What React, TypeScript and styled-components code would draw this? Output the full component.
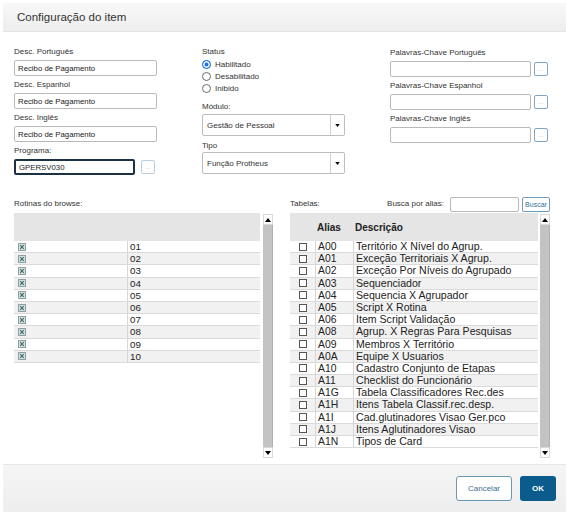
import React from "react"
import styled, { createGlobalStyle } from "styled-components"

const GlobalStyle = createGlobalStyle`
	html, body {
		margin: 0;
		padding: 0;
		background: #fff;
	}
	body {
		font-family: "Liberation Sans", Arial, sans-serif;
		color: #333;
	}
	* {
		box-sizing: border-box;
	}
`

const routines = ["01", "02", "03", "04", "05", "06", "07", "08", "09", "10"]

const tables: [string, string][] = [
	["A00", "Território X Nível do Agrup."],
	["A01", "Exceção Territoriais X Agrup."],
	["A02", "Exceção Por Níveis do Agrupado"],
	["A03", "Sequenciador"],
	["A04", "Sequencia X Agrupador"],
	["A05", "Script X Rotina"],
	["A06", "Item Script Validação"],
	["A08", "Agrup. X Regras Para Pesquisas"],
	["A09", "Membros X Território"],
	["A0A", "Equipe X Usuarios"],
	["A10", "Cadastro Conjunto de Etapas"],
	["A11", "Checklist do Funcionário"],
	["A1G", "Tabela Classificadores Rec.des"],
	["A1H", "Itens Tabela Classif.rec.desp."],
	["A1I", "Cad.glutinadores Visao Ger.pco"],
	["A1J", "Itens Aglutinadores Visao"],
	["A1N", "Tipos de Card"],
]

const CheckedBox = () => (
	<svg width="8" height="8" viewBox="0 0 8 8">
		<rect x="0.5" y="0.5" width="7" height="7" fill="#d5dfdf" stroke="#8ea0a0" />
		<path d="M2.2 2.2 L5.8 5.8 M5.8 2.2 L2.2 5.8" stroke="#3a6a6a" strokeWidth="1.1" />
	</svg>
)

const EmptyBox = () => (
	<svg width="8" height="8" viewBox="0 0 8 8">
		<rect x="0.5" y="0.5" width="7" height="7" fill="#fff" stroke="#555" />
	</svg>
)

const Arrow = ({ up }: { up?: boolean }) => (
	<svg width="6" height="4" viewBox="0 0 6 4">
		<path d={up ? "M0 4 L3 0 L6 4 Z" : "M0 0 L6 0 L3 4 Z"} fill="#000" />
	</svg>
)

const Scrollbar = () => (
	<ScrollTrack>
		<ScrollButton>
			<Arrow up />
		</ScrollButton>
		<ScrollFill />
		<ScrollButton>
			<Arrow />
		</ScrollButton>
	</ScrollTrack>
)

export default function App() {
	return (
		<>
			<GlobalStyle />
			<Dialog>
				<Header>
					<Title>Configuração do item</Title>
				</Header>
				<Body>
					<TopGrid>
						<Column>
							<Label>Desc. Português</Label>
							<TextInput defaultValue="Recibo de Pagamento" />
							<Label>Desc. Espanhol</Label>
							<TextInput defaultValue="Recibo de Pagamento" />
							<Label>Desc. Inglês</Label>
							<TextInput defaultValue="Recibo de Pagamento" />
							<Label>Programa:</Label>
							<InputRow>
								<TextInput defaultValue="GPERSV030" $focused $width={121} />
								<DotsButton $gap={6}>...</DotsButton>
							</InputRow>
						</Column>
						<Column>
							<Label>Status</Label>
							<RadioRow>
								<Radio $checked />
								Habilitado
							</RadioRow>
							<RadioRow>
								<Radio />
								Desabilitado
							</RadioRow>
							<RadioRow>
								<Radio />
								Inibido
							</RadioRow>
							<Label $top={7}>Módulo:</Label>
							<Select $top={1}>
								<SelectText>Gestão de Pessoal</SelectText>
								<SelectCaret>
									<Arrow />
								</SelectCaret>
							</Select>
							<Label $top={4}>Tipo</Label>
							<Select>
								<SelectText>Função Protheus</SelectText>
								<SelectCaret>
									<Arrow />
								</SelectCaret>
							</Select>
						</Column>
						<Column>
							<Label $top={1}>Palavras-Chave Português</Label>
							<InputRow>
								<TextInput $width={141} />
								<DotsButton $gap={3} $blue>...</DotsButton>
							</InputRow>
							<Label>Palavras-Chave Espanhol</Label>
							<InputRow>
								<TextInput $width={141} />
								<DotsButton $gap={3} $blue>...</DotsButton>
							</InputRow>
							<Label>Palavras-Chave Inglês</Label>
							<InputRow>
								<TextInput $width={141} />
								<DotsButton $gap={3} $blue>...</DotsButton>
							</InputRow>
						</Column>
					</TopGrid>
					<LowerGrid>
						<Panel>
							<PanelBar>
								<Label>Rotinas do browse:</Label>
							</PanelBar>
							<GridArea>
								<Table $width={246}>
									<TableHead $cols="113px 1fr" />
									{routines.map((r, i) => (
										<Row key={r} $cols="113px 1fr" $odd={i % 2 === 1}>
											<CheckCell>
												<CheckedBox />
											</CheckCell>
											<Cell $size={9.8}>{r}</Cell>
										</Row>
									))}
								</Table>
								<ScrollSlot $gap={3}>
									<Scrollbar />
								</ScrollSlot>
							</GridArea>
						</Panel>
						<Panel>
							<PanelBar>
								<Label>Tabelas:</Label>
								<Spacer />
								<Label>Busca por alias:</Label>
								<SearchInput />
								<SearchButton>Buscar</SearchButton>
							</PanelBar>
							<GridArea>
								<Table $width={248}>
									<TableHead $cols="25px 38px 1fr">
										<span />
										<HeadCell>Alias</HeadCell>
										<HeadCell>Descrição</HeadCell>
									</TableHead>
									{tables.map(([alias, desc], i) => (
										<Row key={alias} $cols="25px 38px 1fr" $odd={i % 2 === 1}>
											<CheckCell $center>
												<EmptyBox />
											</CheckCell>
											<Cell $size={10.4}>{alias}</Cell>
											<Cell $size={10.6}>{desc}</Cell>
										</Row>
									))}
								</Table>
								<ScrollSlot $gap={2}>
									<Scrollbar />
								</ScrollSlot>
							</GridArea>
						</Panel>
					</LowerGrid>
				</Body>
				<Footer>
					<CancelButton>Cancelar</CancelButton>
					<OkButton>OK</OkButton>
				</Footer>
			</Dialog>
		</>
	)
}

const Dialog = styled.div`
	width: 563px;
	height: 509px;
	margin: 3px;
	display: flex;
	flex-direction: column;
	background: #fff;
`

const Header = styled.div`
	height: 29px;
	padding-left: 14px;
	display: flex;
	align-items: center;
	background: linear-gradient(#f8f8f8, #ededed);
	border-bottom: 1px solid #e3e3e3;
`

const Title = styled.div`
	font-size: 11.5px;
	color: #333;
`

const Body = styled.div`
	flex: 1;
	padding: 14px 0 0 11px;
`

const TopGrid = styled.div`
	display: grid;
	grid-template-columns: 143px 143px 158px;
	column-gap: 45px;
`

const Column = styled.div`
	display: flex;
	flex-direction: column;
	align-items: flex-start;
`

const Label = styled.div<{ $top?: number }>`
	font-size: 8px;
	line-height: 12px;
	height: 12px;
	color: #333;
	white-space: nowrap;
	margin-top: ${(p) => p.$top ?? 0}px;
`

const TextInput = styled.input<{ $focused?: boolean; $width?: number }>`
	width: ${(p) => p.$width ?? 143}px;
	height: 16px;
	margin: 2px 0 3px;
	padding: 0 3px;
	border: ${(p) => (p.$focused ? "2px solid #1d3144" : "1px solid #b9b9b9")};
	border-radius: 2px;
	font-family: inherit;
	font-size: 7.8px;
	color: #222;
	outline: none;
	background: #fff;
`

const InputRow = styled.div`
	display: flex;
	align-items: center;
`

const DotsButton = styled.div<{ $gap: number; $blue?: boolean }>`
	width: 14px;
	height: 14px;
	margin: -1px 0 0 ${(p) => p.$gap}px;
	border: 1px solid ${(p) => (p.$blue ? "#7fa6c4" : "#b7cfe0")};
	border-radius: 2px;
	font-size: 6px;
	line-height: 13px;
	color: #a8a8a8;
	text-align: center;
	background: #fff;
`

const RadioRow = styled.div`
	height: 12px;
	display: flex;
	align-items: center;
	gap: 4px;
	font-size: 8px;
	color: #333;
`

const Radio = styled.span<{ $checked?: boolean }>`
	width: 9px;
	height: 9px;
	border-radius: 50%;
	border: 1px solid ${(p) => (p.$checked ? "#1a73e8" : "#6b6b6b")};
	background: ${(p) => (p.$checked ? "#1a73e8" : "#fff")};
	box-shadow: ${(p) => (p.$checked ? "inset 0 0 0 1.5px #fff" : "none")};
`

const Select = styled.div<{ $top?: number }>`
	width: 143px;
	height: 22px;
	margin-top: ${(p) => p.$top ?? 0}px;
	display: flex;
	border: 1px solid #bdbdbd;
	border-radius: 2px;
	background: #fff;
`

const SelectText = styled.div`
	flex: 1;
	display: flex;
	align-items: center;
	padding-left: 4px;
	font-size: 8px;
	color: #333;
`

const SelectCaret = styled.div`
	width: 14px;
	border-left: 1px solid #d0d0d0;
	display: flex;
	align-items: center;
	justify-content: center;

	svg {
		width: 5px;
		height: 3px;
	}
`

const LowerGrid = styled.div`
	display: grid;
	grid-template-columns: 259px 260px;
	column-gap: 17px;
	margin-top: 18px;
`

const Panel = styled.div`
	display: flex;
	flex-direction: column;
`

const PanelBar = styled.div`
	height: 17px;
	display: flex;
	align-items: center;
	padding-bottom: 1px;
`

const Spacer = styled.div`
	flex: 1;
`

const SearchInput = styled.input`
	width: 69px;
	height: 15px;
	margin-left: 6px;
	border: 1px solid #b9b9b9;
	border-radius: 2px;
	outline: none;
`

const SearchButton = styled.div`
	width: 28px;
	height: 15px;
	margin-left: 3px;
	border: 1px solid #6e9cbc;
	border-radius: 2px;
	font-size: 7px;
	line-height: 13px;
	text-align: center;
	color: #2f6f9a;
	background: #fff;
`

const GridArea = styled.div`
	height: 245px;
	display: flex;
`

const Table = styled.div<{ $width: number }>`
	width: ${(p) => p.$width}px;
	display: flex;
	flex-direction: column;
`

const TableHead = styled.div<{ $cols: string }>`
	height: 28px;
	flex-shrink: 0;
	display: grid;
	grid-template-columns: ${(p) => p.$cols};
	align-items: center;
	background: #e5e5e5;
`

const HeadCell = styled.div`
	padding-left: 2px;
	font-size: 10px;
	font-weight: bold;
	color: #222;
`

const Row = styled.div<{ $cols: string; $odd: boolean }>`
	height: 12.2px;
	flex-shrink: 0;
	display: grid;
	grid-template-columns: ${(p) => p.$cols};
	background: ${(p) => (p.$odd ? "#f1f1f1" : "#fff")};
	border-bottom: 1px solid #dadada;
`

const CheckCell = styled.div<{ $center?: boolean }>`
	display: flex;
	align-items: center;
	justify-content: ${(p) => (p.$center ? "center" : "flex-start")};
	padding-left: ${(p) => (p.$center ? 0 : 4)}px;
`

const Cell = styled.div<{ $size: number }>`
	border-left: 1px solid #d6d6d6;
	padding-left: 2px;
	font-size: ${(p) => p.$size}px;
	line-height: 11px;
	color: #222;
	white-space: nowrap;
	overflow: hidden;
`

const ScrollSlot = styled.div<{ $gap: number }>`
	margin-left: ${(p) => p.$gap}px;
	padding-top: 1px;
`

const ScrollTrack = styled.div`
	width: 10px;
	height: 244px;
	display: flex;
	flex-direction: column;
	background: #c3c3c3;
	border-right: 1px solid #b0b0b0;
`

const ScrollButton = styled.div`
	width: 10px;
	height: 11px;
	flex-shrink: 0;
	display: flex;
	align-items: center;
	justify-content: center;
	background: #fdfdfd;
	border: 1px solid #d8d8d8;
`

const ScrollFill = styled.div`
	flex: 1;
`

const Footer = styled.div`
	height: 48px;
	display: flex;
	align-items: center;
	justify-content: flex-end;
	gap: 8px;
	padding-right: 10px;
	background: linear-gradient(#f5f5f5, #eeeeee);
	border-top: 1px solid #e6e6e6;
`

const CancelButton = styled.div`
	width: 56px;
	height: 25px;
	display: flex;
	align-items: center;
	justify-content: center;
	border: 1px solid #6b97b3;
	border-radius: 3px;
	background: #fff;
	font-size: 8px;
	color: #3d6f92;
`

const OkButton = styled.div`
	width: 36px;
	height: 25px;
	display: flex;
	align-items: center;
	justify-content: center;
	border-radius: 3px;
	background: #0b5b8c;
	font-size: 8px;
	font-weight: bold;
	color: #fff;
`
